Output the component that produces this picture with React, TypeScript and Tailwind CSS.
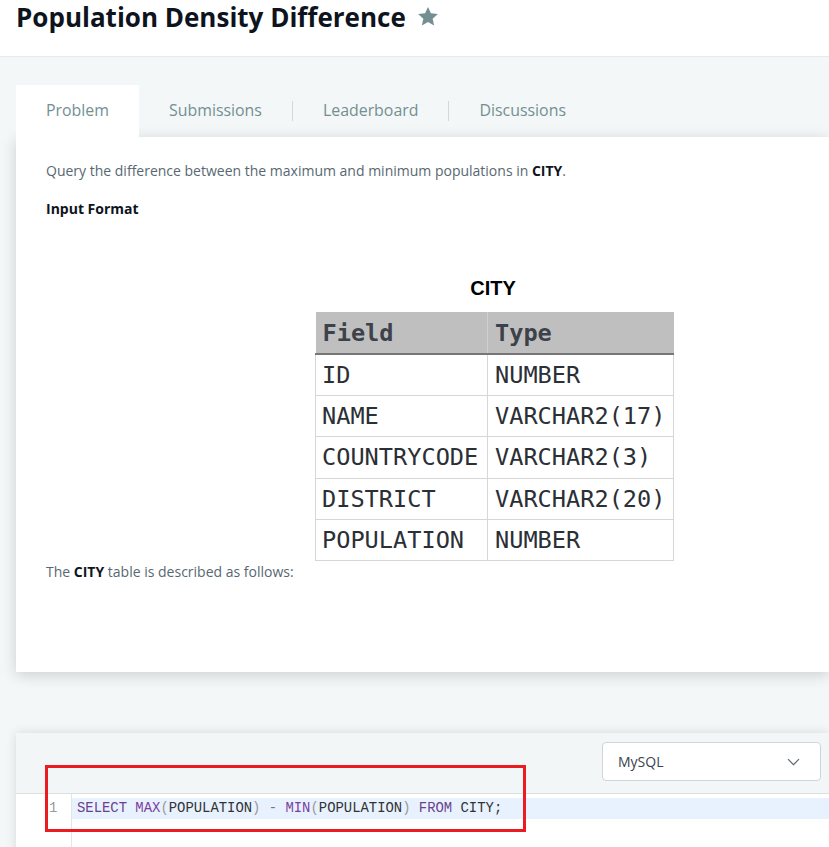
import React from "react";

const rows: [string, string][] = [
  ["ID", "NUMBER"],
  ["NAME", "VARCHAR2(17)"],
  ["COUNTRYCODE", "VARCHAR2(3)"],
  ["DISTRICT", "VARCHAR2(20)"],
  ["POPULATION", "NUMBER"],
];

export default function App() {
  return (
    <div className="relative w-[829px] h-[847px] overflow-hidden bg-[#f3f7f7] font-['Open_Sans',sans-serif]">
      {/* Header */}
      <div className="h-[57px] bg-white border-b border-[#e6eaec] pl-4 flex items-start">
        <h1 className="text-[26px] leading-[34px] font-bold text-[#0e141e]">
          Population Density Difference
        </h1>
        <svg className="ml-[11px] mt-[6px]" width="22" height="21" viewBox="0 0 24 23" fill="#738f93">
          <path d="M12 1l3.2 7 7.6.8-5.7 5.1 1.6 7.5L12 17.6l-6.7 3.8 1.6-7.5L1.2 8.8l7.6-.8z" />
        </svg>
      </div>

      {/* Tabs */}
      <div className="mt-[28px] ml-4 flex h-[52px] items-center text-[15.9px] text-[#738f93]">
        <div className="h-full bg-white px-[30px] flex items-center">Problem</div>
        <div className="px-[30px] flex items-center h-[20px] border-r border-[#d3d9db]">Submissions</div>
        <div className="px-[30px] flex items-center h-[20px] border-r border-[#d3d9db]">Leaderboard</div>
        <div className="px-[30px] flex items-center h-[20px]">Discussions</div>
      </div>

      {/* Problem panel */}
      <div className="ml-4 h-[535px] bg-white shadow-[0_3px_14px_rgba(0,0,0,0.16)] pl-[30px] pt-[24px] text-[14px] leading-[20px] text-[#576871]">
        <p className="mb-[18px]">
          Query the difference between the maximum and minimum populations in{" "}
          <b className="text-[#0e141e]">CITY</b>.
        </p>
        <p className="font-bold text-[#0e141e]">Input Format</p>

        <div className="ml-[269px] mt-[57px] w-[359px]">
          <div className="text-center font-['Liberation_Sans',sans-serif] font-bold text-[20px] leading-[24px] text-black ml-[-3px]">
            CITY
          </div>
          <table className="mt-[12px] w-[359px] border-collapse font-['DejaVu_Sans_Mono',monospace] text-[23.6px] text-[#2b2f36]">
            <thead>
              <tr className="bg-[#bfbfbf] h-[42px] border-b-2 border-[#777]">
                <th className="w-[172px] text-left font-bold pl-[7px] border-r border-[#d0d0d0] text-[#3d424a]">Field</th>
                <th className="text-left font-bold pl-[7px] text-[#3d424a]">Type</th>
              </tr>
            </thead>
            <tbody>
              {rows.map(([a, b]) => (
                <tr key={a} className="h-[41.4px]">
                  <td className="pl-[6px] border border-[#d6d6d6]">{a}</td>
                  <td className="pl-[7px] border border-[#d6d6d6]">{b}</td>
                </tr>
              ))}
            </tbody>
          </table>
        </div>
        <p className="mt-[1px]">
          The <b className="text-[#0e141e]">CITY</b> table is described as follows:
        </p>
      </div>

      {/* Editor */}
      <div className="mt-[61px] ml-4 h-[200px] bg-white shadow-[0_0_10px_rgba(0,0,0,0.12)]">
        <div className="h-[61px] bg-[#f3f6f7] border-b border-[#d9dfe2] flex justify-end pr-[8px] pt-[9px]">
          <div className="w-[219px] h-[39px] bg-white border border-[#cfd6d9] rounded-[4px] flex items-center justify-between pl-[15px] pr-[20px] text-[14px] text-[#39424e]">
            <span>MySQL</span>
            <svg width="13" height="8" viewBox="0 0 13 8" fill="none" stroke="#5b6770" strokeWidth="1.2">
              <path d="M1 1.2l5.5 5.5 5.5-5.5" />
            </svg>
          </div>
        </div>
        <div className="flex h-full font-['Liberation_Mono',monospace] text-[13.9px] leading-[20.6px]">
          <div className="w-[56px] border-r border-[#e2e6e8] pt-[4px] pl-[33px] text-[#999]">1</div>
          <div className="flex-1 pt-[4px]">
            <div className="bg-[#e8f2ff] pl-[5px] text-[#333] whitespace-pre">
              <span className="text-[#6b3f8c]">SELECT</span>{" "}
              <span className="text-[#7b3fa0]">MAX</span>
              <span className="text-[#999]">(</span>POPULATION<span className="text-[#999]">)</span>{" "}
              <span className="text-[#777]">-</span>{" "}
              <span className="text-[#7b3fa0]">MIN</span>
              <span className="text-[#999]">(</span>POPULATION<span className="text-[#999]">)</span>{" "}
              <span className="text-[#6b3f8c]">FROM</span> CITY;
            </div>
          </div>
        </div>
      </div>

      {/* Red annotation box */}
      <div className="absolute left-[45px] top-[765px] w-[481px] h-[67px] border-[3px] border-[#ea1c22] pointer-events-none" />
    </div>
  );
}
